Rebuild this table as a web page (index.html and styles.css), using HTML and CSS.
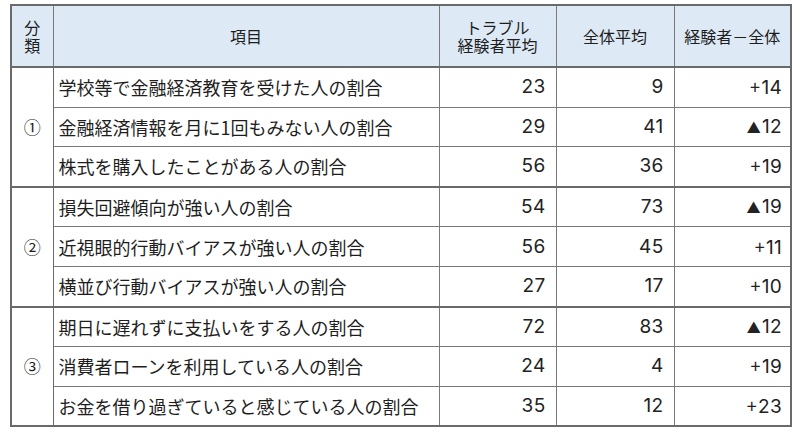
FILE: index.html
```html
<!DOCTYPE html>
<html lang="ja">
<head>
<meta charset="utf-8">
<link rel="stylesheet" href="styles.css">
</head>
<body>
<table class="tbl">
  <colgroup>
    <col class="c1"><col class="c2"><col class="c3"><col class="c4"><col class="c5">
  </colgroup>
  <thead>
    <tr>
      <th class="cat-h"><span class="ln">分</span><span class="ln">類</span></th>
      <th>項目</th>
      <th class="two"><span class="ln">トラブル</span><span class="ln">経験者平均</span></th>
      <th>全体平均</th>
      <th>経験者－全体</th>
    </tr>
  </thead>
  <tbody class="grp">
    <tr><td class="cat" rowspan="3">①</td><td class="item">学校等で金融経済教育を受けた人の割合</td><td class="num">23</td><td class="num">9</td><td class="num diff"><span class="pl">+</span>14</td></tr>
    <tr><td class="item">金融経済情報を月に1回もみない人の割合</td><td class="num">29</td><td class="num">41</td><td class="num diff"><span class="tri">▲</span>12</td></tr>
    <tr><td class="item">株式を購入したことがある人の割合</td><td class="num">56</td><td class="num">36</td><td class="num diff"><span class="pl">+</span>19</td></tr>
  </tbody>
  <tbody class="grp">
    <tr><td class="cat" rowspan="3">②</td><td class="item">損失回避傾向が強い人の割合</td><td class="num">54</td><td class="num">73</td><td class="num diff"><span class="tri">▲</span>19</td></tr>
    <tr><td class="item">近視眼的行動バイアスが強い人の割合</td><td class="num">56</td><td class="num">45</td><td class="num diff"><span class="pl">+</span>11</td></tr>
    <tr><td class="item">横並び行動バイアスが強い人の割合</td><td class="num">27</td><td class="num">17</td><td class="num diff"><span class="pl">+</span>10</td></tr>
  </tbody>
  <tbody class="grp">
    <tr><td class="cat" rowspan="3">③</td><td class="item">期日に遅れずに支払いをする人の割合</td><td class="num">72</td><td class="num">83</td><td class="num diff"><span class="tri">▲</span>12</td></tr>
    <tr><td class="item">消費者ローンを利用している人の割合</td><td class="num">24</td><td class="num">4</td><td class="num diff"><span class="pl">+</span>19</td></tr>
    <tr><td class="item">お金を借り過ぎていると感じている人の割合</td><td class="num">35</td><td class="num">12</td><td class="num diff"><span class="pl">+</span>23</td></tr>
  </tbody>
</table>
</body>
</html>
```
FILE: styles.css
```css
html, body {
  margin: 0;
  padding: 0;
  background: #ffffff;
}
body {
  padding: 4px 0 0 10px;
  font-family: "Noto Sans CJK JP", "Noto Sans", sans-serif;
  color: #1e1e1e;
}
.tbl {
  border-collapse: collapse;
  table-layout: fixed;
  width: 780px;
  border: 2px solid #6a6a6a;
}
.c1 { width: 42px; }
.c2 { width: 386px; }
.c3 { width: 117px; }
.c4 { width: 118px; }
.c5 { width: 117px; }
.tbl th, .tbl td {
  border: 1px solid #7a7a7a;
  padding: 0;
}
.tbl thead th {
  background: #ddeaf6;
  font-weight: normal;
  font-size: 16px;
  line-height: 20px;
  height: 60px;
  text-align: center;
  vertical-align: middle;
  border-bottom: 2px solid #6a6a6a;
}
.ln {
  display: block;
  line-height: 18px;
}
.tbl tbody.grp tr:first-child td {
  border-top: 2px solid #6a6a6a;
}
.tbl td {
  height: 38.6px;
  font-size: 18px;
  line-height: 22px;
  vertical-align: middle;
}
.tbl td.cat {
  text-align: center;
  font-size: 17px;
  border-right: 1px solid #6a6a6a;
}
.tbl td.item {
  text-align: left;
  padding-left: 5px;
  white-space: nowrap;
}
.tbl td.num {
  text-align: right;
  padding-right: 10px;
  font-family: Inter, "Noto Sans", sans-serif;
  font-size: 19px;
  font-weight: 400;
  letter-spacing: 0.3px;
  color: #222;
}
.tbl td.diff {
  padding-right: 8px;
}
.pl {
  font-family: "Noto Sans CJK JP", sans-serif;
  font-size: 18px;
  margin-right: 1px;
}
.tri {
  font-family: "Noto Sans CJK JP", sans-serif;
  font-size: 14px;
  margin-right: 1px;
}
```
